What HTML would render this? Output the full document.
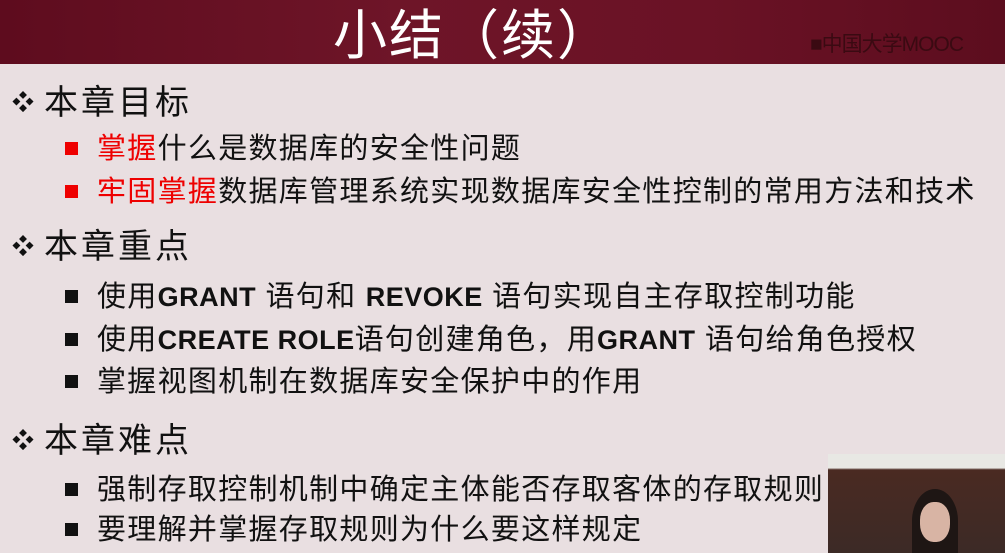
<!DOCTYPE html>
<html><head><meta charset="utf-8"><style>
body{margin:0;width:1005px;height:553px;overflow:hidden;background:#e9dfe1;font-family:"Liberation Sans","Noto Sans CJK SC",sans-serif;position:relative}
.hdr{position:absolute;left:0;top:0;width:1005px;height:64px;background:linear-gradient(90deg,#5e0c1e,#6e1528 40%,#6a1225 70%,#5c0d1e)}
.title{position:absolute;left:333px;top:6px;font-size:54px;color:#fff;line-height:60px;letter-spacing:2px}
.mooc{position:absolute;left:810px;top:28px;font-size:21px;color:#3a0a12;letter-spacing:-1px}
.h{position:absolute;left:12px;font-size:34px;color:#111;line-height:36px;letter-spacing:3px}
.h span{font-size:22px;margin-right:10px;vertical-align:4px;letter-spacing:0}
.i{position:absolute;left:65px;font-size:29px;color:#111;line-height:32px;white-space:nowrap;letter-spacing:1.3px}
.sq{display:inline-block;width:13px;height:13px;background:#111;margin-right:19px;vertical-align:3px}
.r .sq{background:#e00}
.red{color:#e00}
b{font-family:"Liberation Sans",sans-serif;font-weight:bold;letter-spacing:0.5px;font-size:27px}
.vid{position:absolute;left:828px;top:454px;width:177px;height:99px;background:linear-gradient(#e8e8e4 0,#e8e8e4 14%,#4a2a22 16%,#3c2a26 100%)}
</style></head><body>
<div class="hdr"></div>
<div class="title">小结（续）</div>
<div class="mooc">■中国大学MOOC</div>
<div class="h" style="top:85px"><span>❖</span>本章目标</div>
<div class="i r" style="top:133px"><span class="sq"></span><span class="red">掌握</span>什么是数据库的安全性问题</div>
<div class="i r" style="top:176px"><span class="sq"></span><span class="red">牢固掌握</span>数据库管理系统实现数据库安全性控制的常用方法和技术</div>
<div class="h" style="top:229px"><span>❖</span>本章重点</div>
<div class="i" style="top:281px"><span class="sq"></span>使用<b>GRANT</b> 语句和 <b>REVOKE</b> 语句实现自主存取控制功能</div>
<div class="i" style="top:324px"><span class="sq"></span>使用<b>CREATE ROLE</b>语句创建角色，用<b>GRANT</b> 语句给角色授权</div>
<div class="i" style="top:366px"><span class="sq"></span>掌握视图机制在数据库安全保护中的作用</div>
<div class="h" style="top:423px"><span>❖</span>本章难点</div>
<div class="i" style="top:474px"><span class="sq"></span>强制存取控制机制中确定主体能否存取客体的存取规则</div>
<div class="i" style="top:514px"><span class="sq"></span>要理解并掌握存取规则为什么要这样规定</div>
<div class="vid">
<div style="position:absolute;left:84px;top:35px;width:46px;height:64px;border-radius:50% 50% 0 0;background:#1e1614"></div>
<div style="position:absolute;left:92px;top:48px;width:30px;height:40px;border-radius:45%;background:#d8b4a4"></div>
</div>
</body></html>
